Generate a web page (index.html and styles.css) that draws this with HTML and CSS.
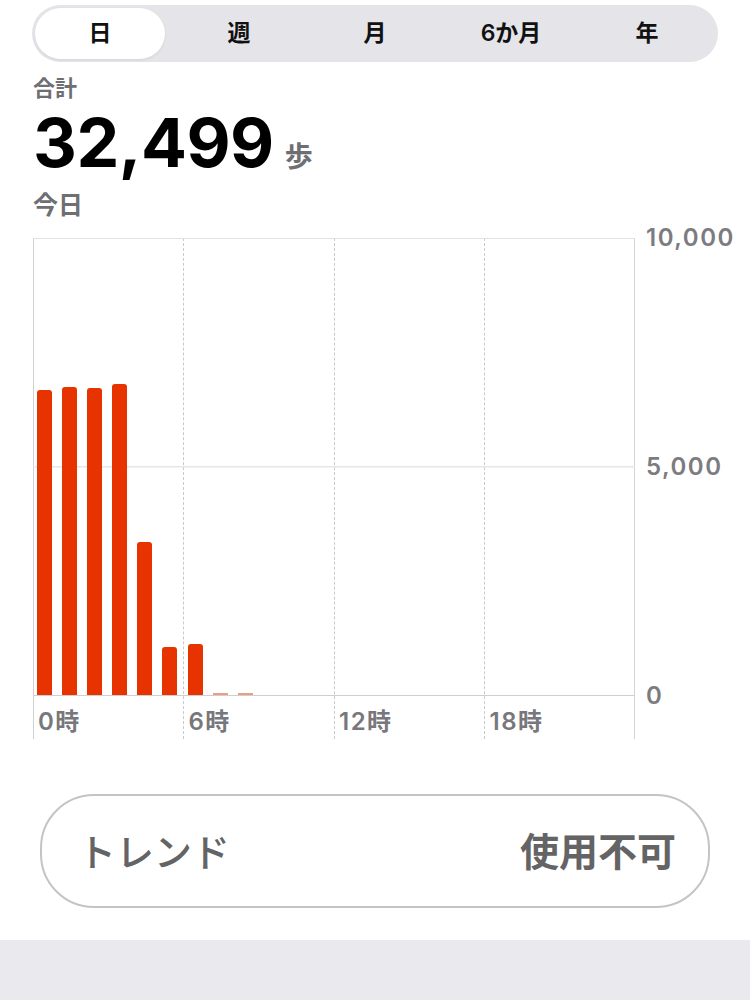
FILE: index.html
```html
<!DOCTYPE html>
<html lang="ja">
<head>
<meta charset="utf-8">
<title>歩数</title>
<link rel="stylesheet" href="styles.css">
</head>
<body>
<div class="page">
  <div class="segmented">
    <div class="seg active">日</div>
    <div class="seg">週</div>
    <div class="seg">月</div>
    <div class="seg">6か月</div>
    <div class="seg">年</div>
  </div>

  <div class="summary">
    <div class="label">合計</div>
    <div class="total"><span class="num">32,499</span><span class="unit">歩</span></div>
    <div class="date">今日</div>
  </div>

  <div class="chart">
    <div class="cols"><span></span><span></span><span></span><span></span></div>
    <div class="hlines"></div>
    <div class="bars">
      <div class="slot"><div class="bar" style="height:66.74%"></div></div>
      <div class="slot"><div class="bar" style="height:67.40%"></div></div>
      <div class="slot"><div class="bar" style="height:67.18%"></div></div>
      <div class="slot"><div class="bar" style="height:68.05%"></div></div>
      <div class="slot"><div class="bar" style="height:33.48%"></div></div>
      <div class="slot"><div class="bar" style="height:10.50%"></div></div>
      <div class="slot"><div class="bar" style="height:11.16%"></div></div>
      <div class="slot"><div class="bar tiny" style="height:0.3%"></div></div>
      <div class="slot"><div class="bar tiny" style="height:0.3%"></div></div>
      <div class="slot"></div><div class="slot"></div><div class="slot"></div>
      <div class="slot"></div><div class="slot"></div><div class="slot"></div>
      <div class="slot"></div><div class="slot"></div><div class="slot"></div>
      <div class="slot"></div><div class="slot"></div><div class="slot"></div>
      <div class="slot"></div><div class="slot"></div><div class="slot"></div>
    </div>
    <div class="xlabels">
      <span>0時</span><span>6時</span><span>12時</span><span>18時</span>
    </div>
    <div class="yaxis">
      <span>10,000</span><span>5,000</span><span>0</span>
    </div>
  </div>

  <div class="trend">
    <span class="trend-label">トレンド</span>
    <span class="trend-value">使用不可</span>
  </div>
</div>
<div class="bottom-band"></div>
</body>
</html>
```

FILE: styles.css
```css
* { box-sizing: border-box; }

html, body {
  margin: 0;
  padding: 0;
  background: #ffffff;
}

body {
  width: 750px;
  height: 1000px;
  overflow: hidden;
  font-family: "Inter", "Noto Sans CJK JP", sans-serif;
  color: #000;
  display: flex;
  flex-direction: column;
}

.page {
  flex: 1;
  padding: 5px 0 0 0;
}

/* segmented control */
.segmented {
  margin: 0 32px 0 32px;
  height: 57px;
  background: #e4e4e9;
  border-radius: 29px;
  padding: 3px;
  display: grid;
  grid-template-columns: repeat(5, 1fr);
}

.seg {
  display: flex;
  align-items: center;
  justify-content: center;
  padding-bottom: 6px;
  font-size: 23px;
  font-weight: 600;
  color: #111;
  border-radius: 26px;
}

.seg.active {
  background: #ffffff;
  margin-right: 6px;
  box-shadow: 0 1px 3px rgba(0,0,0,0.08);
}

/* summary */
.summary {
  padding-left: 33px;
  margin-top: 12px;
}

.label {
  font-size: 22px;
  line-height: 28px;
  font-weight: 700;
  color: #6e6e73;
}

.total {
  display: flex;
  align-items: baseline;
  margin-top: 7px;
  height: 66px;
}

.num {
  font-size: 68px;
  line-height: 66px;
  font-weight: 700;
  letter-spacing: -0.5px;
  color: #000;
}

.unit {
  font-size: 28px;
  font-weight: 700;
  color: #6e6e73;
  margin-left: 11px;
}

.date {
  margin-top: 15px;
  font-size: 25px;
  line-height: 30px;
  font-weight: 700;
  color: #6e6e73;
}

/* chart */
.chart {
  margin: 18px 0 0 33px;
  display: grid;
  grid-template-columns: 602px 1fr;
  grid-template-rows: 458px 43px;
}

.cols {
  grid-column: 1;
  grid-row: 1 / 3;
  display: grid;
  grid-template-columns: repeat(4, 1fr);
  border-right: 1.5px solid #d4d4d4;
}

.cols span {
  border-left: 1.5px dashed #c9c9c9;
}

.cols span:first-child {
  border-left: 1.5px solid #d0d0d0;
}

.hlines {
  grid-column: 1;
  grid-row: 1;
  border-top: 1.5px solid #e2e2e2;
  border-bottom: 1.5px solid #cfcfcf;
  background: linear-gradient(#e6e6e6, #e6e6e6) center / 100% 1.5px no-repeat;
}

.bars {
  grid-column: 1;
  grid-row: 1;
  display: grid;
  grid-template-columns: repeat(24, 1fr);
  padding-bottom: 1.5px;
}

.slot {
  display: flex;
  align-items: flex-end;
  padding-left: 4px;
}

.bar {
  width: 15px;
  background: #e63300;
  border-radius: 3px 3px 0 0;
}

.bar.tiny {
  background: #e8a080;
  border-radius: 0;
}

.xlabels {
  grid-column: 1;
  grid-row: 2;
  display: grid;
  grid-template-columns: repeat(4, 1fr);
  align-items: center;
  padding-top: 3px;
}

.xlabels span {
  padding-left: 5px;
  font-size: 24px;
  font-weight: 600;
  color: #77777c;
  letter-spacing: 1.5px;
}

.yaxis {
  grid-column: 2;
  grid-row: 1;
  display: flex;
  flex-direction: column;
  justify-content: space-between;
  padding-left: 11px;
}

.yaxis span {
  height: 0;
  line-height: 0;
  display: flex;
  align-items: center;
  font-size: 24px;
  font-weight: 600;
  color: #7c7c80;
  letter-spacing: 1.5px;
}

/* trend card */
.trend {
  margin: 55px 40px 0 40px;
  height: 114px;
  border: 2px solid #c4c4c6;
  border-radius: 54px;
  display: flex;
  align-items: center;
  justify-content: space-between;
  padding: 0 32px 4px 36px;
}

.trend-label {
  font-size: 38px;
  font-weight: 500;
  color: #646466;
}

.trend-value {
  font-size: 39px;
  font-weight: 700;
  color: #646466;
}

.bottom-band {
  height: 60px;
  background: #e9e9ee;
  flex: none;
}
```
